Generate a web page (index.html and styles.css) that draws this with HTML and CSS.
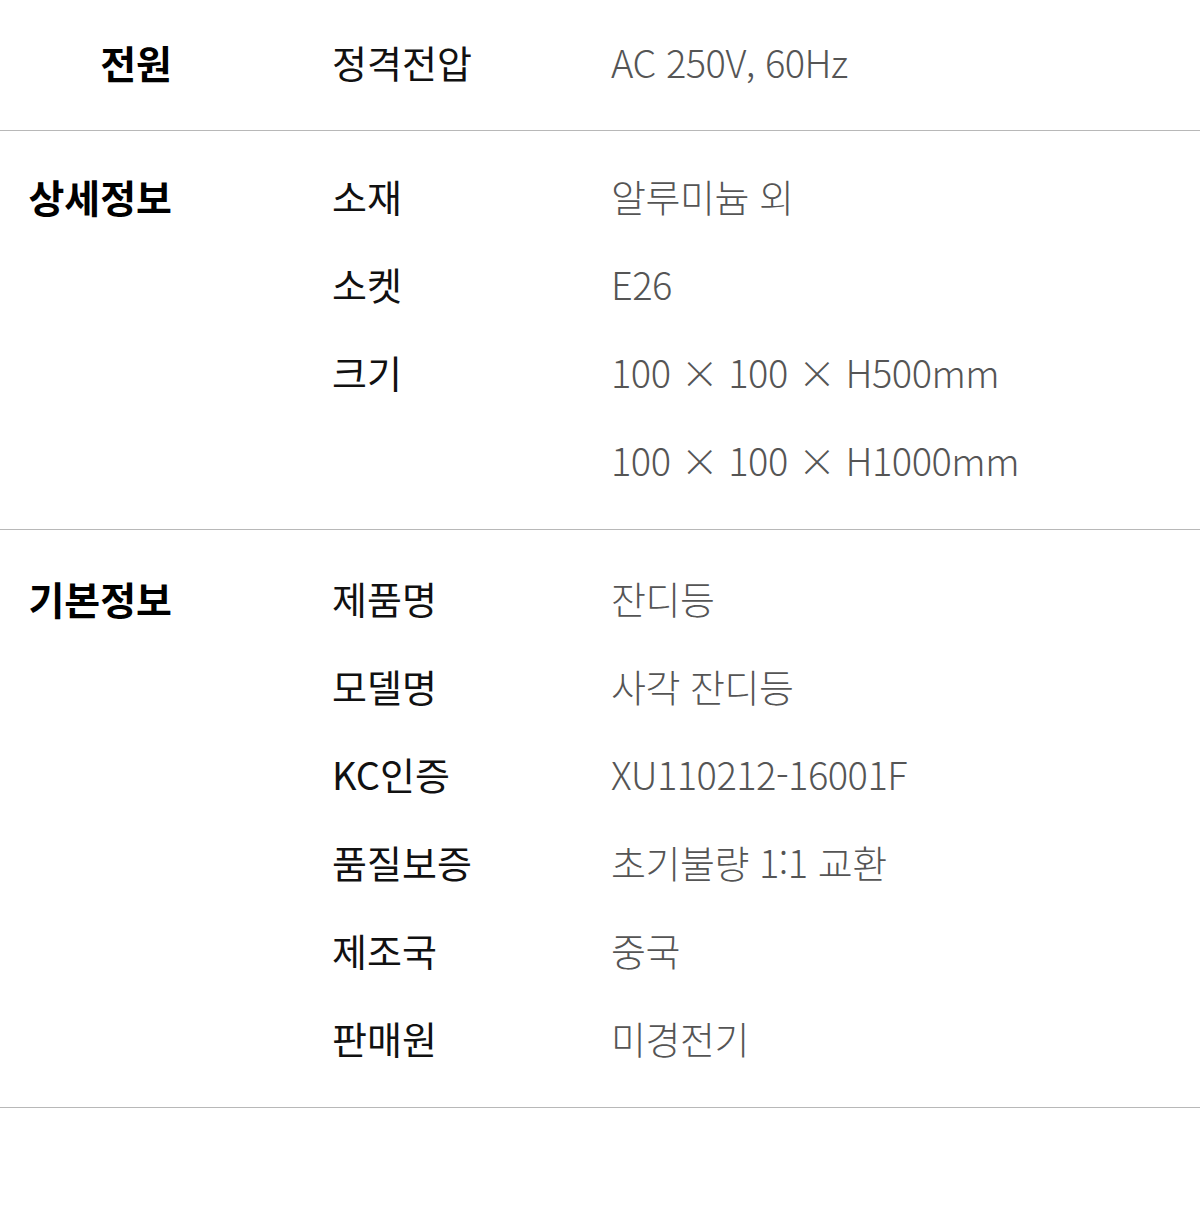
FILE: index.html
```html
<!DOCTYPE html>
<html lang="ko">
<head>
<meta charset="utf-8">
<title>제품 정보</title>
<link rel="stylesheet" href="styles.css">
</head>
<body>
<div class="spec">
  <section class="group group-power">
    <h2 class="group-title">전원</h2>
    <div class="rows">
      <div class="row"><div class="label">정격전압</div><div class="values"><div class="value">AC 250V, 60Hz</div></div></div>
    </div>
  </section>
  <section class="group group-detail">
    <h2 class="group-title">상세정보</h2>
    <div class="rows">
      <div class="row"><div class="label">소재</div><div class="values"><div class="value">알루미늄 외</div></div></div>
      <div class="row"><div class="label">소켓</div><div class="values"><div class="value">E26</div></div></div>
      <div class="row"><div class="label">크기</div><div class="values"><div class="value">100 × 100 × H500mm</div><div class="value">100 × 100 × H1000mm</div></div></div>
    </div>
  </section>
  <section class="group group-basic">
    <h2 class="group-title">기본정보</h2>
    <div class="rows">
      <div class="row"><div class="label">제품명</div><div class="values"><div class="value">잔디등</div></div></div>
      <div class="row"><div class="label">모델명</div><div class="values"><div class="value">사각 잔디등</div></div></div>
      <div class="row"><div class="label">KC인증</div><div class="values"><div class="value">XU110212-16001F</div></div></div>
      <div class="row"><div class="label">품질보증</div><div class="values"><div class="value">초기불량 1:1 교환</div></div></div>
      <div class="row"><div class="label">제조국</div><div class="values"><div class="value">중국</div></div></div>
      <div class="row"><div class="label">판매원</div><div class="values"><div class="value">미경전기</div></div></div>
    </div>
  </section>
</div>
</body>
</html>
```

FILE: styles.css
```css
html, body {
  margin: 0;
  padding: 0;
  background: #ffffff;
}
body {
  font-family: "Noto Sans CJK KR", "Noto Sans", sans-serif;
  font-size: 38px;
  color: #111111;
}
.spec {
  display: flex;
  flex-direction: column;
}
.group {
  display: flex;
  padding: 22px 0 25px;
  border-bottom: 1px solid #b8b8b8;
}
.group-power {
  padding-top: 18px;
  padding-bottom: 24px;
}
.group-detail {
  padding-top: 21px;
}
.group-basic {
  padding-top: 24px;
}
.group-title {
  margin: 0;
  width: 172px;
  flex: none;
  text-align: right;
  font-size: 39px;
  font-weight: 700;
  line-height: 88px;
  color: #000000;
}
.rows {
  flex: 1;
  padding-left: 160px;
  display: flex;
  flex-direction: column;
}
.row {
  display: flex;
}
.label {
  width: 279px;
  flex: none;
  line-height: 88px;
  color: #111111;
}
.values {
  display: flex;
  flex-direction: column;
}
.value {
  line-height: 88px;
  font-weight: 300;
  letter-spacing: -0.5px;
  color: #555555;
}
```
